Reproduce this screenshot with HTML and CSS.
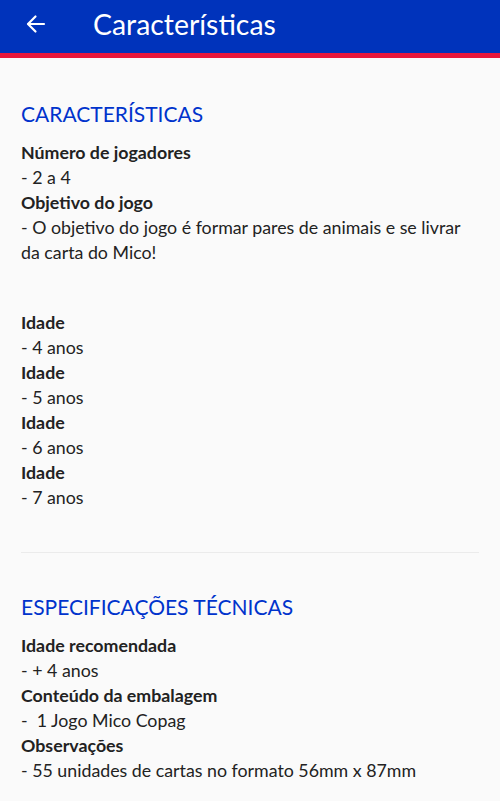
FILE: index.html
```html
<!DOCTYPE html>
<html lang="pt">
<head>
    <meta charset="UTF-8">
    <meta name="viewport" content="width=device-width, initial-scale=1.0">
    <title>Características</title>
    <link rel="stylesheet" href="styles.css">
</head>
<body>
    <header class="topbar">
        <button class="back-btn" aria-label="Voltar">
            <svg width="24" height="24" viewBox="0 0 24 24" fill="none" stroke="white" stroke-width="2.2" stroke-linecap="round" stroke-linejoin="round">
                <path d="M20 12H4.5"/>
                <path d="M11.5 4.5L4 12l7.5 7.5"/>
            </svg>
        </button>
        <h1 class="topbar-title">Características</h1>
    </header>

    <main class="content">
        <section class="block">
            <h2 class="block-title">CARACTERÍSTICAS</h2>
            <p class="label">Número de jogadores</p>
            <p class="value">- 2 a 4</p>
            <p class="label">Objetivo do jogo</p>
            <p class="value">- O objetivo do jogo é formar pares de animais e se livrar da carta do Mico!</p>

            <div class="spacer"></div>

            <p class="label">Idade</p>
            <p class="value">- 4 anos</p>
            <p class="label">Idade</p>
            <p class="value">- 5 anos</p>
            <p class="label">Idade</p>
            <p class="value">- 6 anos</p>
            <p class="label">Idade</p>
            <p class="value">- 7 anos</p>
        </section>

        <hr class="divider">

        <section class="block block-second">
            <h2 class="block-title">ESPECIFICAÇÕES TÉCNICAS</h2>
            <p class="label">Idade recomendada</p>
            <p class="value">- + 4 anos</p>
            <p class="label">Conteúdo da embalagem</p>
            <p class="value">-&nbsp;&nbsp;1 Jogo Mico Copag</p>
            <p class="label">Observações</p>
            <p class="value">- 55 unidades de cartas no formato 56mm x 87mm</p>
        </section>
    </main>
</body>
</html>
```

FILE: styles.css
```css
body {
    font-family: Lato, "Noto Sans", sans-serif;
    background-color: #fafafa;
    color: #222;
    margin: 0;
    padding: 0;
}

.topbar {
    display: flex;
    align-items: center;
    height: 47px;
    background-color: #0033bb;
    border-bottom: 5px solid #e8173c;
    padding: 0 16px 6px 24px;
}

.back-btn {
    background: none;
    border: none;
    padding: 0;
    width: 24px;
    height: 24px;
    display: flex;
    cursor: pointer;
}

.topbar-title {
    margin: 0 0 0 45px;
    color: white;
    font-size: 28.4px;
    font-weight: 400;
}

.content {
    padding: 0 21px;
}

.block {
    padding-top: 41px;
}

.block-second {
    padding-top: 39px;
}

.block-title {
    margin: 0 0 11px;
    color: #0033cc;
    font-size: 21px;
    font-weight: 400;
    line-height: 30px;
}

.label,
.value {
    margin: 0;
    font-size: 17.8px;
    line-height: 25px;
}

.label {
    font-weight: 700;
}

.spacer {
    height: 45px;
}

.divider {
    border: none;
    border-top: 1px solid #ebebeb;
    margin: 42px 0 0;
}
```
